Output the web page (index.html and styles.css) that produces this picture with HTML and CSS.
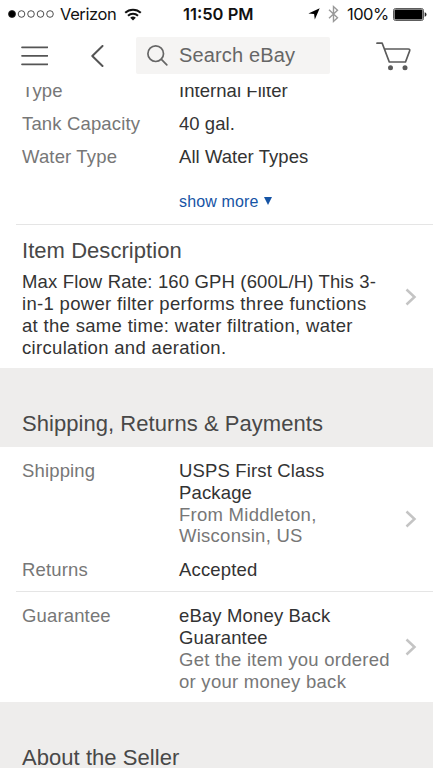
FILE: index.html
```html
<!DOCTYPE html>
<html lang="en">
<head>
<meta charset="utf-8">
<meta name="viewport" content="width=device-width, initial-scale=1">
<title>Item details</title>
<link rel="stylesheet" href="styles.css">
</head>
<body>
<div class="app">
  <div class="status">
    <svg class="signal" width="46" height="8" viewBox="0 0 46 8" fill="none" stroke="#222" stroke-width=".8"><circle cx="4" cy="4" r="3.5" fill="#000"/><circle cx="13.5" cy="4" r="3.3"/><circle cx="23" cy="4" r="3.3"/><circle cx="32.5" cy="4" r="3.3"/><circle cx="42" cy="4" r="3.3"/></svg>
    <span class="carrier">Verizon</span>
    <svg class="wifi" width="18" height="13" viewBox="0 0 18 13" fill="none" stroke="#111" stroke-width="2"><path d="M1.2 4.8a11.2 11.2 0 0 1 15.6 0M4 7.8a7.2 7.2 0 0 1 10 0"/><path d="M9 12.5 6.2 9.8a4 4 0 0 1 5.6 0z" fill="#111" stroke="none"/></svg>
    <span class="time">11:50 PM</span>
    <svg class="location" width="12" height="12" viewBox="0 0 12 12"><path d="M11.7.3 6.8 11.6 6.1 6 .4 5.4z" fill="#000"/></svg>
    <svg class="bluetooth" width="11" height="18" viewBox="0 0 11 18" fill="none" stroke="#999" stroke-width="1.4"><path d="m1 4.7 8.5 8-4 3.7V1.6l4 3.6-8.5 8"/></svg>
    <span class="percent">100%</span>
    <svg class="battery" width="34" height="13" viewBox="0 0 34 13"><rect x=".5" y=".5" width="30" height="12" rx="2" fill="#fff" stroke="#333" stroke-width=".8"/><rect x="1.5" y="1.5" width="28" height="10" rx="1" fill="#000"/><path d="M31.7 4.3q1.8.5 1.8 2.2t-1.8 2.2z" fill="#222"/></svg>
  </div>

  <header class="nav">
    <svg class="menu" width="27" height="20" viewBox="0 0 27 20" fill="none" stroke="#555" stroke-width="1.7" stroke-linecap="round"><path d="M1 1.3h25.5M1 9.8h25.5M1 18.3h25.5"/></svg>
    <svg class="back" width="13" height="22" viewBox="0 0 13 22" fill="none" stroke="#555" stroke-width="2" stroke-linecap="round" stroke-linejoin="round"><path d="M11.5 1 1.3 11l10.2 10"/></svg>
    <div class="search">
      <svg width="21" height="21" viewBox="0 0 21 21" fill="none" stroke="#666" stroke-width="1.7" stroke-linecap="round"><circle cx="8.7" cy="8.7" r="7.8"/><path d="m14.4 14.4 5.4 5.4"/></svg>
      <span>Search eBay</span>
    </div>
    <svg class="cart" width="35" height="29" viewBox="0 0 35 29" fill="none" stroke="#5b5b5b" stroke-width="1.7" stroke-linecap="round" stroke-linejoin="round"><path d="M1 1.2h5.2L13.3 20h16.2L33.6 9q.7-2-1.4-2H8.5"/><circle cx="14.5" cy="25.8" r="2.5" fill="#5b5b5b" stroke="none"/><circle cx="29" cy="25.8" r="2.5" fill="#5b5b5b" stroke="none"/></svg>
  </header>

  <main>
    <section class="specs">
      <div class="row"><span class="label">Type</span><span class="value">Internal Filter</span></div>
      <div class="row"><span class="label">Tank Capacity</span><span class="value">40 gal.</span></div>
      <div class="row"><span class="label">Water Type</span><span class="value">All Water Types</span></div>
      <div class="more"><span>show more</span><svg width="8" height="8" viewBox="0 0 8 8"><path d="M0 0h8L4 8z" fill="#1654a5"/></svg></div>
    </section>

    <section class="description">
      <div>
        <h2>Item Description</h2>
        <p><span class="lead">Max Flow Rate: 160 GPH (600L/H) This 3-</span><br>in-1 power filter performs three functions<br>at the same time: water filtration, water<br>circulation and aeration.</p>
      </div>
      <svg class="chevron" width="12" height="18" viewBox="0 0 12 18"><path d="m1.5 1.5 8 7.5-8 7.5"/></svg>
    </section>

    <h2 class="band">Shipping, Returns &amp; Payments</h2>

    <section class="shipping">
      <div class="details">
        <div class="row"><span class="label">Shipping</span><div class="value">USPS First Class<br>Package<br><span class="muted">From Middleton,<br>Wisconsin, US</span></div></div>
        <div class="row"><span class="label">Returns</span><span class="value">Accepted</span></div>
      </div>
      <svg class="chevron" width="12" height="18" viewBox="0 0 12 18"><path d="m1.5 1.5 8 7.5-8 7.5"/></svg>
    </section>

    <section class="guarantee">
      <div class="row"><span class="label">Guarantee</span><div class="value">eBay Money Back<br>Guarantee<br><span class="muted">Get the item you ordered<br>or your money back</span></div></div>
      <svg class="chevron" width="12" height="18" viewBox="0 0 12 18"><path d="m1.5 1.5 8 7.5-8 7.5"/></svg>
    </section>

    <h2 class="band">About the Seller</h2>
  </main>
</div>
</body>
</html>
```
FILE: styles.css
```css
* { box-sizing: border-box; }
body { margin: 0; background: #fff; color: #333; font: 18.5px/21.8px "Liberation Sans", Arial, sans-serif; letter-spacing: .15px; }
svg { display: block; flex: none; }
h2, p { margin: 0; }
.app { width: 433px; height: 768px; overflow: hidden; display: flex; flex-direction: column; }

.status { height: 28px; flex: none; display: flex; align-items: center; padding-left: 8px; color: #111; font: 16.5px/28px Inter, sans-serif; white-space: nowrap; letter-spacing: 0; }
.carrier { width: 57px; margin-left: 6px; letter-spacing: -.4px; }
.wifi { margin-left: 7px; }
.time { width: 73px; margin-left: 41px; font-weight: 600; }
.location { margin-left: 52px; }
.bluetooth { margin-left: 8px; }
.percent { width: 42px; margin-left: 8px; letter-spacing: -.5px; }
.battery { margin-left: 4px; }

.nav { height: 59px; flex: none; display: flex; align-items: center; padding: 0 0 3px 21px; }
.back { margin-left: 43px; }
.search { width: 194px; height: 37px; margin: -1px 0 0 32px; padding-left: 11px; display: flex; align-items: center; gap: 11px; background: #f5f4f3; border-radius: 2px; color: #666; font-size: 20px; white-space: nowrap; }
.cart { margin-left: 46px; }

main { flex: 1; min-height: 0; overflow: hidden; white-space: nowrap; }
.row { display: flex; }
.label { width: 157px; flex: none; color: #777; }
.muted { color: #777; letter-spacing: .26px; }
.specs { height: 144px; margin-top: -7px; padding-left: 22px; }
.specs .row { height: 33.2px; }
.specs .value { letter-spacing: .05px; }
.more { display: flex; align-items: center; gap: 5px; margin: 11px 0 0 157px; color: #1654a5; font-size: 16px; }

h2 { font-size: 22px; line-height: 25px; font-weight: 400; color: #484848; letter-spacing: .05px; }
.description, .guarantee { margin-left: 16px; border-top: 1px solid #e5e5e5; display: flex; justify-content: space-between; align-items: center; padding: 0 16px 0 6px; }
.description { height: 144px; }
.description > div { padding-top: 4px; }
.description p { margin-top: 8px; letter-spacing: .32px; }
.lead { letter-spacing: .15px; }
.chevron { fill: none; stroke: #c4c4c4; stroke-width: 2.5; }
.band { height: 79px; padding: 43px 22px 0; background: #eeedec; }
.shipping { height: 144px; display: flex; justify-content: space-between; align-items: center; padding: 0 16px 0 22px; }
.details { display: flex; flex-direction: column; gap: 12px; padding-top: 3px; }
.guarantee { height: 111px; }
.guarantee .row { padding-top: 4px; }
```
